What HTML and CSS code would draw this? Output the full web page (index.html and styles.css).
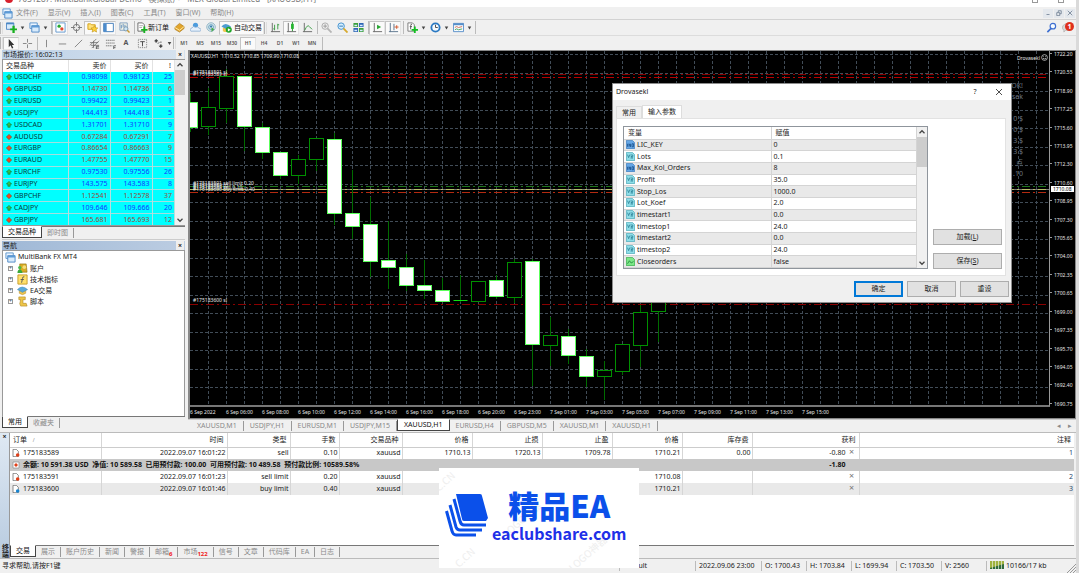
FILE: index.html
```html
<!DOCTYPE html>
<html lang="zh-CN">
<head>
<meta charset="utf-8">
<title>XAUUSD,H1</title>
<link rel="stylesheet" href="styles.css">
</head>
<body>
<svg class="defs" aria-hidden="true">
  <symbol id="windows" viewBox="0 0 12 12"><path d="M1 1h8v6H1z" fill="#eaf4ff" stroke="#5a94cc"/><path d="M3 4h8v7H3z" fill="#d8ebfc" stroke="#4b87c4"/><path d="M3 4h8v2H3z" fill="#5b9bd8"/></symbol>
  <symbol id="newchart" viewBox="0 0 12 12"><path d="M.5 1h8v7h-8z" fill="#d8ebfc" stroke="#4b87c4"/><path d="M.5 1h8v1.500h-8z" fill="#4b87c4"/><path d="M7 4v3H4.500v2H7v3h2.500V9H12V7H9.500V4z" fill="#18b020"/></symbol>
  <symbol id="marketwatch" viewBox="0 0 12 12"><path d="M1 1h10v10H1z" fill="#fff" stroke="#5e95cc"/><circle cx="4.500" cy="4.500" r="1.800" fill="#25a92f"/><circle cx="7.500" cy="7.500" r="1.800" fill="#e0492c"/></symbol>
  <symbol id="target" viewBox="0 0 12 12"><circle cx="6" cy="6" r="3.500" fill="none" stroke="#777"/><path d="M6 0v12M0 6h12" stroke="#777"/><circle cx="6" cy="6" r="1.500" fill="#f0f0f0"/></symbol>
  <symbol id="folderstar" viewBox="0 0 12 12"><path d="M1 2h3l1 1h4v5H1z" fill="#ffe27a" stroke="#d3a017"/><path d="M8 4l1.200 2.300 2.600.2-1.900 1.900.6 2.600L8 9.700 5.600 11l.6-2.600L4.300 6.500l2.500-.2z" fill="#ffd23c" stroke="#b98d14" stroke-width=".6"/></symbol>
  <symbol id="panel" viewBox="0 0 12 12"><path d="M.7 1.500h10.600v9H.7z" fill="#fff" stroke="#3e79b8"/><path d="M1 2h3v8.500H1z" fill="#4c8ccd"/></symbol>
  <symbol id="tester" viewBox="0 0 12 12"><path d="M1 1h8v8H1z" fill="#f8f6e8" stroke="#7d9cc0"/><path d="M2.500 3v4M4.500 2v4M6.500 3v4" stroke="#5588bb"/><circle cx="7.500" cy="7.500" r="2.300" fill="#cde8fa" stroke="#7694aa"/><path d="M9 9l2.500 2.500" stroke="#c39835" stroke-width="1.500"/></symbol>
  <symbol id="neworder" viewBox="0 0 12 12"><path d="M1 1h5l2 2v7H1z" fill="#fff" stroke="#666"/><path d="M2.500 4h4M2.500 6h3" stroke="#888" stroke-width=".7"/><path d="M7 5v2.500H4.500v2H7V12h2V9.500h2.500v-2H9V5z" fill="#18b020"/></symbol>
  <symbol id="book" viewBox="0 0 12 12"><path d="M1 6l5-4.500 5 3.500v2L6 11 1 8z" fill="#e2a52c" stroke="#a97411" stroke-width=".7"/><path d="M1 6l5 3 5-4" fill="none" stroke="#fff0b0"/></symbol>
  <symbol id="cloud" viewBox="0 0 12 12"><circle cx="6" cy="3.500" r="2.800" fill="#4d9cdd"/><path d="M1 10a2 2 0 0 1 1-3.500 2.700 2.700 0 0 1 4-.7 3 3 0 0 1 4 1A1.700 1.700 0 0 1 11 10z" fill="#e7f1fb" stroke="#719bc9" stroke-width=".7"/></symbol>
  <symbol id="signal" viewBox="0 0 12 12"><circle cx="5.500" cy="5.500" r="4.700" fill="#dbe7ea" stroke="#8eb4c6"/><circle cx="5.500" cy="5.500" r="2.600" fill="none" stroke="#5d9cc1"/><circle cx="5.500" cy="5" r="1.200" fill="#397cae"/><path d="M6 6v5l3-3z" fill="#47a948"/></symbol>
  <symbol id="expert" viewBox="0 0 12 12"><path d="M2.500 6h7v3q-3.500 3-7 0z" fill="#f0c64f" stroke="#bd912b" stroke-width=".6"/><path d="M.5 5q5-5.500 11 0l-5.500 3z" fill="#59a9da" stroke="#3782b7" stroke-width=".6"/></symbol>
  <symbol id="autotrade" viewBox="0 0 12 12"><path d="M2 6h7v4q-3 2-7 0z" fill="#f0c64f"/><path d="M.5 5q4-5.500 10.500 0L6 8z" fill="#4d9dd0"/><circle cx="8.500" cy="8.500" r="3.300" fill="#22a52a"/><path d="M7.500 6.700v3.600l3-1.800z" fill="#fff"/></symbol>
  <symbol id="bars" viewBox="0 0 12 12"><path d="M2.500 1v9.500H11M1 10.500h2" fill="none" stroke="#666"/><path d="M5 3v6M5 7.500H3.500M8.500 2v6M8.500 3H10" stroke="#3a9b42" fill="none"/></symbol>
  <symbol id="candles" viewBox="0 0 12 12"><path d="M2.500 1v9.500H11M1 10.500h2" fill="none" stroke="#666"/><path d="M7 0v10" stroke="#198f22"/><path d="M5.500 2h3v5.500h-3z" fill="#25b32f"/></symbol>
  <symbol id="linechart" viewBox="0 0 12 12"><path d="M2.500 1v9.500H11M1 10.500h2" fill="none" stroke="#666"/><path d="M3 9q3-7 5-4l3 3" stroke="#3a9b42" fill="none"/></symbol>
  <symbol id="zoomin" viewBox="0 0 12 12"><circle cx="4.500" cy="4.500" r="3.500" fill="#eee" stroke="#aaa"/><path d="M2.500 4.500h4m-2-2v4" stroke="#999"/><path d="M7 7l4.500 4.500" stroke="#b5b5b5" stroke-width="2"/></symbol>
  <symbol id="zoomout" viewBox="0 0 12 12"><circle cx="4.500" cy="4.500" r="3.500" fill="#d7efff" stroke="#3c8dcc"/><path d="M2.500 4.500h4" stroke="#2473b4"/><path d="M7 7l4.500 4.500" stroke="#d6a92e" stroke-width="2"/></symbol>
  <symbol id="tile" viewBox="0 0 12 12"><path d="M.5 1h5v4.500h-5zM6.500 6.500h5V11h-5z" fill="#3a9e3c"/><path d="M6.500 1h5v4.500h-5zM.5 6.500h5V11h-5z" fill="#2d65b5"/><path d="M1.500 3h3v1.500h-3zM7.500 3h3v1.500h-3zM1.500 8.500h3V10h-3zM7.500 8.500h3V10h-3z" fill="#d8ecff"/></symbol>
  <symbol id="autoscroll" viewBox="0 0 12 12"><path d="M2.500 1v9.500H11M1 10.500h2" fill="none" stroke="#666"/><path d="M5.500 3v5L10 5.500z" fill="#25a52f"/></symbol>
  <symbol id="shift" viewBox="0 0 12 12"><path d="M2.500 1v9.500H11M1 10.500h2M6.500 2v7" fill="none" stroke="#56718a"/><path d="M7 5.500h4.500M9.500 3.500v4" stroke="#d2562b"/></symbol>
  <symbol id="indicator" viewBox="0 0 12 12"><path d="M1 1h5l2 2v7H1z" fill="#fff" stroke="#777"/><path d="M5.500 2.500Q4 2 4 4v4M3 5h2.500" stroke="#555" fill="none"/><path d="M7.500 5v2.500H5v2h2.500V12h2V9.500H12v-2H9.500V5z" fill="#12bd20"/></symbol>
  <symbol id="clock" viewBox="0 0 12 12"><circle cx="6" cy="6" r="4.500" fill="#f4faff" stroke="#2878c2" stroke-width="2"/><path d="M6 3v3h2.500" fill="none" stroke="#444"/></symbol>
  <symbol id="template" viewBox="0 0 12 12"><path d="M.5 1.500h11v9H.5z" fill="#f6fbff" stroke="#568ec8"/><path d="M.5 1.500h11v2H.5z" fill="#568ec8"/><path d="M2 6l2-1 2 1 4-1" fill="none" stroke="#d26c50"/><path d="M2 8.500l2-1 2 1 4-1" fill="none" stroke="#49a55b"/></symbol>
  <symbol id="cursor" viewBox="0 0 12 12"><path d="M3 1v9l2-2 1.500 3.500 1.500-.7L6.500 7.500H9z" fill="#333"/></symbol>
  <symbol id="cross" viewBox="0 0 12 12"><path d="M6 1v4M6 7v4M1 6h4M7 6h4" stroke="#666" stroke-width=".8"/></symbol>
  <symbol id="vline" viewBox="0 0 12 12"><path d="M6 2v8" stroke="#666" stroke-width=".8"/></symbol>
  <symbol id="hline" viewBox="0 0 12 12"><path d="M2 6.500h8" stroke="#666" stroke-width=".8"/></symbol>
  <symbol id="trend" viewBox="0 0 12 12"><path d="M2 10l8-8" stroke="#666" stroke-width=".8"/></symbol>
  <symbol id="channel" viewBox="0 0 12 12"><path d="M1 8l7-7M3 11l8-8M1 5h9M2 8h9M5 3v8" stroke="#666" stroke-width=".8"/><path d="M8 9h3M8 11h3M8 9v3" stroke="#333" stroke-width=".8"/></symbol>
  <symbol id="fibo" viewBox="0 0 12 12"><path d="M1 2.500h10M1 5.500h10M1 8.500h7" stroke="#777" stroke-dasharray="1.500 .5"/><path d="M9.500 12V8.500H12M9.500 10.500h2" fill="none" stroke="#444" stroke-width=".8"/></symbol>
  <symbol id="label" viewBox="0 0 12 12"><path d="M1.500 1.500h9v9h-9z" fill="none" stroke="#777" stroke-dasharray="1 1"/><path d="M3.500 4h5M6 4v5" stroke="#444"/></symbol>
  <symbol id="shapes" viewBox="0 0 12 12"><path d="M1 3.500L3.500 1 6 3.500H4.500V5h-2V3.500zM6 8.500h1.500V7h2v1.500H11L8.500 11z" fill="#444"/><path d="M5 6l2-1M7.500 4.500h2" stroke="#444" stroke-width=".8"/></symbol>
  <symbol id="search" viewBox="0 0 12 12"><circle cx="7.500" cy="4.500" r="3" fill="#f6fbff" stroke="#3d6ed0" stroke-width="1.300"/><path d="M5.500 7l-4 4" stroke="#3d6ed0" stroke-width="1.800"/></symbol>
  <symbol id="chat" viewBox="0 0 12 12"><path d="M1 4q4-4 9 0 2 3-3 5H4l-2 2V9q-3-2-1-5z" fill="#d7d7d7" stroke="#aaa" stroke-width=".7"/></symbol>
  <symbol id="up" viewBox="0 0 8 8"><path d="M4 .5L7.500 4H5.500v3h-3V4H.5z" fill="#35c448" stroke="#176b26" stroke-width=".8"/></symbol>
  <symbol id="down" viewBox="0 0 8 8"><path d="M4 .5L7.500 4 4 7.500.5 4z" fill="#f04a20" stroke="#8c3a1a" stroke-width=".8"/></symbol>
  <symbol id="account" viewBox="0 0 12 12"><path d="M3 1h7l1 9H3z" fill="#d8ac24" stroke="#957312" stroke-width=".7"/><circle cx="8" cy="4.500" r="2" fill="#f6dd79"/><circle cx="3" cy="5" r="1.800" fill="#48b94a"/><path d="M.5 11q0-4 2.500-4t3 4z" fill="#38a83c"/></symbol>
  <symbol id="func" viewBox="0 0 12 12"><path d="M1 1h10v10H1z" fill="#ffe06b" stroke="#c79b25"/><path d="M8 3Q6 2.500 6 5L5 9.500M4 6h3.500" fill="none" stroke="#555"/></symbol>
  <symbol id="scroll" viewBox="0 0 12 12"><path d="M2 1h7v3H6.500v4H10l1 3H4L3 8.500 4 4H2z" fill="#edc549" stroke="#b68d27" stroke-width=".7"/></symbol>
  <symbol id="doc-red" viewBox="0 0 12 12"><path d="M1.500.5h5l3 3v8h-8z" fill="#fff" stroke="#555"/><circle cx="8.500" cy="9" r="2.700" fill="#df3f19"/></symbol>
  <symbol id="doc-blue" viewBox="0 0 12 12"><path d="M1.500.5h5l3 3v8h-8z" fill="#fff" stroke="#555"/><circle cx="8.500" cy="9" r="2.700" fill="#1883ce"/></symbol>
  <symbol id="balance" viewBox="0 0 12 12"><path d="M1.500 1.500h9v9h-9z" fill="#fff" stroke="#888"/><path d="M6 3l3 3-3 3-3-3z" fill="#df3f19"/></symbol>
  <symbol id="t-int" viewBox="0 0 12 12"><path d="M.5.5h8l3 3v8H.5z" fill="#65a7e6" stroke="#3e7ebd"/><path d="M2 5v4M4 9V5l2 4V5M8 5h2v4H8z" fill="none" stroke="#174e8a"/></symbol>
  <symbol id="t-dbl" viewBox="0 0 12 12"><path d="M.5.5h8l3 3v8H.5z" fill="#8edde8" stroke="#4ba9b8"/><path d="M2 3.500l1.500 4L5 3.500M6 8h3l-2.500-2H9V4H6" fill="none" stroke="#267c92"/></symbol>
  <symbol id="t-bool" viewBox="0 0 12 12"><path d="M.5.5h8l3 3v8H.5z" fill="#7be887" stroke="#35aa4b"/><path d="M2 9l2.500-4 2.500 3 3-2" fill="none" stroke="#187a34"/></symbol>
</svg>

<header class="titlebar"><i class="app-dot"></i><span>7031287: MultiBankGlobal-Demo - 模拟账户 - MEX Global Limited - [XAUUSD,H1]</span><span class="win-controls"><i></i><i></i></span></header>

<nav class="menubar">
  <svg class="icon"><use href="#windows"/></svg>
  <button>文件(F)</button><button>显示(V)</button><button>插入(I)</button><button>图表(C)</button><button>工具(T)</button><button>窗口(W)</button><button>帮助(H)</button>
  <div class="mdi"><button aria-label="最小化"><svg viewBox="0 0 8 8"><path d="M2 6h4"/></svg></button><button aria-label="还原"><svg viewBox="0 0 8 8"><path d="M1 3.500h4v4H1zM3 3V1h4v4H5"/></svg></button><button aria-label="关闭"><svg viewBox="0 0 8 8"><path d="M1 1l6 6M7 1L1 7"/></svg></button></div>
</nav>

<div class="toolbar">
  <i class="grip"></i>
  <button aria-label="新图表"><svg class="icon"><use href="#newchart"/></svg></button><i class="caret"></i>
  <button aria-label="配置"><svg class="icon"><use href="#windows"/></svg></button><i class="caret"></i><i class="sep"></i>
  <button class="on" aria-label="市场报价"><svg class="icon"><use href="#marketwatch"/></svg></button>
  <button aria-label="数据窗口"><svg class="icon"><use href="#target"/></svg></button>
  <button class="on" aria-label="导航"><svg class="icon"><use href="#folderstar"/></svg></button>
  <button class="on" aria-label="终端"><svg class="icon"><use href="#panel"/></svg></button>
  <button aria-label="策略测试"><svg class="icon"><use href="#tester"/></svg></button><i class="sep"></i>
  <button class="wide"><svg class="icon"><use href="#neworder"/></svg>新订单</button>
  <button aria-label="编辑器"><svg class="icon"><use href="#book"/></svg></button>
  <button aria-label="社区"><svg class="icon"><use href="#cloud"/></svg></button>
  <button aria-label="信号"><svg class="icon"><use href="#signal"/></svg></button>
  <button class="wide auto on"><svg class="icon"><use href="#autotrade"/></svg>自动交易</button><i class="grip"></i>
  <button aria-label="柱状图"><svg class="icon"><use href="#bars"/></svg></button>
  <button class="on" aria-label="蜡烛图"><svg class="icon"><use href="#candles"/></svg></button>
  <button aria-label="折线图"><svg class="icon"><use href="#linechart"/></svg></button><i class="sep"></i>
  <button aria-label="放大"><svg class="icon"><use href="#zoomin"/></svg></button>
  <button aria-label="缩小"><svg class="icon"><use href="#zoomout"/></svg></button>
  <button aria-label="平铺"><svg class="icon"><use href="#tile"/></svg></button><i class="sep"></i>
  <button class="on" aria-label="自动滚动"><svg class="icon"><use href="#autoscroll"/></svg></button>
  <button class="on" aria-label="图表平移"><svg class="icon"><use href="#shift"/></svg></button><i class="sep"></i>
  <button aria-label="指标"><svg class="icon"><use href="#indicator"/></svg></button><i class="caret"></i>
  <button aria-label="周期"><svg class="icon"><use href="#clock"/></svg></button><i class="caret"></i>
  <button aria-label="模板"><svg class="icon"><use href="#template"/></svg></button><i class="caret"></i><i class="sep"></i>
  <div class="tools-right"><button aria-label="搜索"><svg class="icon"><use href="#search"/></svg></button><button class="chat" aria-label="消息"><svg class="icon"><use href="#chat"/></svg><b>1</b></button></div>
</div>

<div class="toolbar drawing">
  <i class="grip"></i>
  <button class="on" aria-label="光标"><svg class="icon"><use href="#cursor"/></svg></button>
  <button aria-label="十字线"><svg class="icon"><use href="#cross"/></svg></button><i class="sep"></i>
  <button aria-label="垂直线"><svg class="icon"><use href="#vline"/></svg></button>
  <button aria-label="水平线"><svg class="icon"><use href="#hline"/></svg></button>
  <button aria-label="趋势线"><svg class="icon"><use href="#trend"/></svg></button>
  <button aria-label="通道"><svg class="icon"><use href="#channel"/></svg></button>
  <button aria-label="斐波那契"><svg class="icon"><use href="#fibo"/></svg></button>
  <button class="letter">A</button>
  <button aria-label="文字标签"><svg class="icon"><use href="#label"/></svg></button>
  <button aria-label="箭头"><svg class="icon"><use href="#shapes"/></svg></button><i class="caret"></i><i class="grip"></i>
  <div class="periods"><button>M1</button><button>M5</button><button>M15</button><button>M30</button><button class="on">H1</button><button>H4</button><button>D1</button><button>W1</button><button>MN</button></div><i class="sep"></i>
</div>

<main class="workspace">
  <aside class="sidebar">
    <section class="market">
      <h2 class="pane-title">市场报价: 16:02:13<button aria-label="关闭">×</button></h2>
      <div class="quotes">
        <table>
          <colgroup><col class="c-sym"><col class="c-bid"><col class="c-ask"><col></colgroup>
          <thead><tr><th>交易品种</th><th>卖价</th><th>买价</th><th>!</th></tr></thead>
          <tbody>
            <tr class="u"><td><svg><use href="#up"/></svg>USDCHF</td><td>0.98098</td><td>0.98123</td><td>25</td></tr>
            <tr class="d"><td><svg><use href="#down"/></svg>GBPUSD</td><td>1.14730</td><td>1.14736</td><td>6</td></tr>
            <tr class="u"><td><svg><use href="#up"/></svg>EURUSD</td><td>0.99422</td><td>0.99423</td><td>1</td></tr>
            <tr class="u"><td><svg><use href="#up"/></svg>USDJPY</td><td>144.413</td><td>144.418</td><td>5</td></tr>
            <tr class="u"><td><svg><use href="#up"/></svg>USDCAD</td><td>1.31701</td><td>1.31710</td><td>9</td></tr>
            <tr class="d"><td><svg><use href="#down"/></svg>AUDUSD</td><td>0.67284</td><td>0.67291</td><td>7</td></tr>
            <tr class="d"><td><svg><use href="#down"/></svg>EURGBP</td><td>0.86654</td><td>0.86663</td><td>9</td></tr>
            <tr class="d"><td><svg><use href="#down"/></svg>EURAUD</td><td>1.47755</td><td>1.47770</td><td>15</td></tr>
            <tr class="u"><td><svg><use href="#up"/></svg>EURCHF</td><td>0.97530</td><td>0.97556</td><td>26</td></tr>
            <tr class="u"><td><svg><use href="#up"/></svg>EURJPY</td><td>143.575</td><td>143.583</td><td>8</td></tr>
            <tr class="d"><td><svg><use href="#down"/></svg>GBPCHF</td><td>1.12541</td><td>1.12578</td><td>37</td></tr>
            <tr class="u"><td><svg><use href="#up"/></svg>CADJPY</td><td>109.646</td><td>109.666</td><td>20</td></tr>
            <tr class="d"><td><svg><use href="#down"/></svg>GBPJPY</td><td>165.681</td><td>165.693</td><td>12</td></tr>
          </tbody>
        </table>
        <div class="scroll"><svg viewBox="0 0 8 8"><path d="M2 5l2-2 2 2"/></svg><i></i><svg viewBox="0 0 8 8"><path d="M2 3l2 2 2-2"/></svg></div>
      </div>
      <div class="tabs"><button class="active">交易品种</button><button>即时图</button></div>
    </section>
    <section class="navigator">
      <h2 class="pane-title strong">导航<button aria-label="关闭">×</button></h2>
      <ul class="tree">
        <li><svg class="icon"><use href="#windows"/></svg>MultiBank FX MT4</li>
        <li class="child"><i>+</i><svg class="icon"><use href="#account"/></svg>账户</li>
        <li class="child"><i>+</i><svg class="icon"><use href="#func"/></svg>技术指标</li>
        <li class="child"><i>+</i><svg class="icon"><use href="#expert"/></svg>EA交易</li>
        <li class="child"><i>+</i><svg class="icon"><use href="#scroll"/></svg>脚本</li>
      </ul>
      <div class="tabs"><button class="active">常用</button><button>收藏夹</button></div>
    </section>
  </aside>

  <section class="chart-area">
    <div class="chart">
      <svg class="plot" id="plot" role="img" aria-label="XAUUSD H1"></svg>
      <div class="prices" id="prices"></div>
      <div class="times" id="times"></div>
      <div class="ea-name">Drovasekl<svg viewBox="0 0 8 8"><circle cx="4" cy="4" r="3.300"/><path d="M2.500 3h.8M4.700 3h.8M2.200 4.800q1.800 1.800 3.600 0"/></svg></div>
      <div class="ea-info"><span>OK!</span><span>sek</span><span></span><span>0 $</span><span>0 $</span><span>3 $</span><span>3 $</span><span>点</span><span>.10</span></div>
      <div class="price-now">1710.08</div>
    </div>
    <div class="tabs chart-tabs"><button>XAUUSD,M1</button><button>USDJPY,H1</button><button>EURUSD,M1</button><button>USDJPY,M15</button><button class="active">XAUUSD,H1</button><button>EURUSD,H4</button><button>GBPUSD,M5</button><button>XAUUSD,M1</button><button>XAUUSD,H1</button><span class="arrows"><i>◂</i><i>▸</i></span></div>
  </section>
</main>

<section class="terminal">
  <div class="rail"><button aria-label="关闭">×</button><span>终端</span></div>
  <div class="terminal-body">
    <table>
      <colgroup><col class="k1"><col class="k2"><col class="k3"><col class="k4"><col class="k5"><col class="k6"><col class="k6"><col class="k6"><col class="k6"><col class="k6"><col class="k7"><col></colgroup>
      <thead><tr><th>订单 <small>/</small></th><th>时间</th><th>类型</th><th>手数</th><th>交易品种</th><th>价格</th><th>止损</th><th>止盈</th><th>价格</th><th>库存费</th><th>获利</th><th>注释</th></tr></thead>
      <tbody>
        <tr><td><svg><use href="#doc-red"/></svg>175183589</td><td>2022.09.07 16:01:22</td><td>sell</td><td>0.10</td><td>xauusd</td><td>1710.13</td><td>1720.13</td><td>1709.78</td><td>1710.21</td><td>0.00</td><td>-0.80<button aria-label="平仓">×</button></td><td>1</td></tr>
        <tr class="sum"><td colspan="10"><svg><use href="#balance"/></svg>余额: 10 591.38 USD&nbsp; 净值: 10 589.58&nbsp; 已用预付款: 100.00&nbsp; 可用预付款: 10 489.58&nbsp; 预付款比例: 10589.58%</td><td>-1.80</td><td></td></tr>
        <tr><td><svg><use href="#doc-red"/></svg>175183591</td><td>2022.09.07 16:01:23</td><td>sell limit</td><td>0.20</td><td>xauusd</td><td></td><td></td><td></td><td>1710.08</td><td></td><td><button aria-label="删除">×</button></td><td>2</td></tr>
        <tr class="alt"><td><svg><use href="#doc-blue"/></svg>175183600</td><td>2022.09.07 16:01:46</td><td>buy limit</td><td>0.40</td><td>xauusd</td><td></td><td></td><td></td><td>1710.21</td><td></td><td><button aria-label="删除">×</button></td><td>3</td></tr>
      </tbody>
    </table>
    <div class="tabs"><button class="active">交易</button><button>展示</button><button>账户历史</button><button>新闻</button><button>警报</button><button>邮箱<sub>6</sub></button><button>市场<sub>122</sub></button><button>信号</button><button>文章</button><button>代码库</button><button>EA</button><button>日志</button></div>
  </div>
</section>

<footer class="status">
  <span class="help">寻求帮助,请按F1键</span>
  <span class="s-profile">Default</span><span class="s-date">2022.09.06 23:00</span><span class="s-val">O: 1700.43</span><span class="s-val">H: 1703.84</span><span class="s-val">L: 1699.94</span><span class="s-val">C: 1703.50</span><span class="s-val">V: 2560</span>
  <span class="s-net"><svg viewBox="0 0 14 8"><path d="M0 0h14v8H0z" fill="#2f6a3c"/><path d="M0 0h14v3L0 7z" fill="#9fb23f"/><path d="M2.500 0v8M5.500 0v8M8.500 0v8M11.500 0v8" stroke="#e8efe0" stroke-width=".7"/></svg>10166/17 kb</span>
  <svg class="resize" viewBox="0 0 10 10"><path d="M1 10l9-9M4 10l6-6M7 10l3-3"/></svg>
</footer>

<div class="dialog" role="dialog" aria-label="Drovasekl">
  <div class="dialog-title"><span>Drovasekl</span><button aria-label="帮助">?</button><button aria-label="关闭"><svg viewBox="0 0 8 8"><path d="M1 1l6 6M7 1L1 7"/></svg></button></div>
  <div class="dialog-tabs"><button>常用</button><button class="active">输入参数</button></div>
  <div class="dialog-panel">
    <div class="params">
      <table>
        <colgroup><col class="p-name"><col></colgroup>
        <thead><tr><th>变量</th><th>赋值</th></tr></thead>
        <tbody>
          <tr><td><svg><use href="#t-int"/></svg>LIC_KEY</td><td>0</td></tr>
          <tr><td><svg><use href="#t-dbl"/></svg>Lots</td><td>0.1</td></tr>
          <tr><td><svg><use href="#t-int"/></svg>Max_Kol_Orders</td><td>8</td></tr>
          <tr><td><svg><use href="#t-dbl"/></svg>Profit</td><td>35.0</td></tr>
          <tr><td><svg><use href="#t-dbl"/></svg>Stop_Los</td><td>1000.0</td></tr>
          <tr><td><svg><use href="#t-dbl"/></svg>Lot_Koef</td><td>2.0</td></tr>
          <tr><td><svg><use href="#t-dbl"/></svg>timestart1</td><td>0.0</td></tr>
          <tr><td><svg><use href="#t-dbl"/></svg>timestop1</td><td>24.0</td></tr>
          <tr><td><svg><use href="#t-dbl"/></svg>timestart2</td><td>0.0</td></tr>
          <tr><td><svg><use href="#t-dbl"/></svg>timestop2</td><td>24.0</td></tr>
          <tr><td><svg><use href="#t-bool"/></svg>Closeorders</td><td>false</td></tr>
        </tbody>
      </table>
      <div class="scroll"><svg viewBox="0 0 8 8"><path d="M2 5l2-2 2 2"/></svg><i></i><svg viewBox="0 0 8 8"><path d="M2 3l2 2 2-2"/></svg></div>
    </div>
    <div class="side-buttons"><button class="btn">加载(<u>L</u>)</button><button class="btn">保存(<u>S</u>)</button></div>
  </div>
  <div class="dialog-actions"><button class="btn primary">确定</button><button class="btn">取消</button><button class="btn">重设</button></div>
</div>

<div class="brand">
  <svg class="watermarks" viewBox="0 0 200 100" aria-hidden="true"><g fill="#eeeeee" font-size="10"><text transform="translate(0 24) rotate(-42)">C.CN</text><text transform="translate(68 70) rotate(-42)">LOGO神器</text><text transform="translate(134 104) rotate(-42)">LOGO神器</text><text transform="translate(20 100) rotate(-42)">C.CN</text></g></svg>
  <svg class="brand-mark" viewBox="0 0 43 43"><path d="M11 0h24q2 0 2 2l6 22-2 3H19q-2 0-2-2z" fill="#0b50ea"/><path d="M9 5l6 22q1 4 4 4h22M5 11l6 22q1 3 4 3h22M1.500 17L7 37q1 4 4 4h20" fill="none" stroke="#0b50ea" stroke-width="3"/></svg>
  <div class="brand-text"><strong>精品EA</strong><span>eaclubshare.com</span></div>
</div>
<script src="chart.js"></script>
</body>
</html>
```
FILE: styles.css
```css
* { box-sizing: border-box; }
body {
  margin: 0; height: 100vh; overflow: hidden; position: relative;
  display: flex; flex-direction: column;
  background: #f0f0f0; color: #222; border-right: 3px solid #dadada;
  font: 7px/10px "Noto Sans", "Noto Sans CJK SC", sans-serif;
}
button { font: inherit; color: inherit; background: none; border: 0; padding: 0; margin: 0; }
table { border-collapse: collapse; table-layout: fixed; width: 100%; }
th, td { padding: 0; font-weight: 400; white-space: nowrap; overflow: hidden; }
i { font-style: normal; }
.defs { display: none; }
.icon { width: 11px; height: 11px; flex: none; }

.titlebar { height: 7px; flex: none; overflow: hidden; background: #fff; color: #777; display: flex; align-items: flex-end; padding: 0 12px 4px 5px; font-size: 8px; gap: 5px; line-height: 8px; white-space: nowrap; }
.app-dot { width: 8px; height: 8px; border-radius: 50%; background: #d8202c; }
.win-controls { margin-left: auto; display: flex; gap: 20px; }
.win-controls i { width: 6px; height: 6px; border: 1px solid #999; }

.menubar { height: 12px; flex: none; display: flex; align-items: center; padding-left: 2px; gap: 10px; color: #8a8a8a; }
.menubar .icon { margin-right: -7px; }
.mdi { margin-left: auto; display: flex; gap: 1px; padding-right: 1px; }
.mdi button { width: 10px; height: 9px; background: #e4e8ed; display: grid; place-items: center; }
.mdi svg { width: 6px; height: 6px; fill: none; stroke: #65778b; }

.toolbar { height: 16px; flex: none; display: flex; align-items: center; border-top: 1px solid #d2d2d2; }
.toolbar button { width: 16px; height: 14px; display: flex; align-items: center; justify-content: center; border: 1px solid transparent; flex: none; }
.toolbar button.on { background: #fafafa; border-color: #c4c4c4 #e4e4e4 #e4e4e4 #c4c4c4; }
.toolbar .wide { width: 36px; color: #111; white-space: nowrap; }
.toolbar .auto { width: 45px; gap: 2px; }
.toolbar .letter { font-weight: 700; color: #555; }
.grip { width: 3px; height: 12px; border-left: 1px solid #b5b5b5; border-right: 1px solid #dedede; flex: none; }
.sep { width: 3px; height: 13px; border-right: 1px solid #bbb; flex: none; }
.caret { width: 7px; height: 4px; flex: none; background: #444; clip-path: polygon(25% 25%, 75% 25%, 50% 100%); }
.tools-right { margin-left: auto; display: flex; padding-right: 1px; }
.toolbar .chat { position: relative; }
.chat b { position: absolute; right: 0; top: 0; width: 9px; height: 9px; border-radius: 50%; background: #df301c; color: #fff; line-height: 9px; }
.drawing { height: 15px; border-top-color: #dcdcdc; }
.drawing button { height: 13px; }
.periods { display: flex; }
.periods button { font-size: 5px; font-weight: 600; color: #555; }

.workspace { flex: 1; min-height: 0; display: flex; }
.sidebar { width: 188px; flex: none; display: flex; flex-direction: column; padding: 0 3px 3px 2px; }
.market { border-bottom: 1px solid #ccc; }
.pane-title { margin: 0; height: 9px; padding: 0 1px; font-size: 7px; line-height: 9px; font-weight: 400; display: flex; justify-content: space-between; background: linear-gradient(90deg, #bdd1e7, #d6e2ee); }
.pane-title.strong { background: linear-gradient(90deg, #9fb8d6, #bccde2); }
.pane-title button { width: 8px; line-height: 8px; background: #eee; font-weight: 700; }
.quotes { display: flex; background: #fff; height: 167px; border: solid #999; border-width: 1px 0 1px 1px; overflow: hidden; }
.quotes table { height: 166px; flex: 1; width: 0; }
.c-sym { width: 65px; }
.c-bid, .c-ask { width: 42px; }
.quotes th, .quotes td { text-align: right; padding-right: 2px; border-right: 1px solid #b6dede; }
.quotes th { height: 12px; padding-right: 3px; border-color: #e2e2e2; }
.quotes th:first-child, .quotes td:first-child { text-align: left; padding-left: 3px; }
.quotes tbody tr { background: #0ff; border-bottom: 1px solid #a5dede; color: #123bff; }
.quotes tbody tr.d { color: #9c4a3c; }
.quotes tbody td:first-child { color: #053c3c; }
.quotes td svg { width: 6px; height: 6px; margin-right: 2px; vertical-align: -1px; }
.scroll { width: 10px; flex: none; background: #f0f0f0; display: flex; flex-direction: column; align-items: stretch; }
.scroll svg { height: 10px; fill: none; stroke: #444; }
.scroll i { height: 25px; background: #cdcdcd; margin-bottom: auto; }

.tabs { display: flex; height: 13px; flex: none; color: #8a8a8a; line-height: 11px; border-top: 1px solid #777; background: #f0f0f0; white-space: nowrap; }
.tabs button { padding: 0 5px; border-right: 1px solid #999; height: 10px; margin-top: 1px; line-height: 10px; flex: none; }
.tabs button.active { background: #fff; color: #111; border: 1px solid #444; border-top-color: #fff; height: 12px; margin-top: -1px; }
.navigator { flex: 1; min-height: 0; display: flex; flex-direction: column; padding-top: 1px; }
.tree { flex: 1; list-style: none; margin: 0; padding: 0 0 0 2px; background: #fff; border: 1px solid #999; border-bottom: 0; }
.tree li { display: flex; align-items: center; gap: 2px; height: 11px; }
.tree li:first-child { height: 12px; }
.tree i { width: 5px; height: 5px; border: 1px solid #999; color: #456; font-size: 5px; line-height: 3px; text-align: center; margin-right: 2px; }
.tree .child { padding-left: 3px; }

.chart-area { flex: 1; min-width: 0; display: flex; flex-direction: column; }
.chart { flex: 1; min-height: 0; position: relative; display: grid; grid-template-columns: 1fr 25px; grid-template-rows: 1fr 11px; background: #000; border: 2px solid #888; border-width: 1px 1px 1px 2px; color: #e6e6e6; font-size: 5px; line-height: 6px; }
.plot { width: 100%; height: 100%; border-right: 1px solid #999; border-bottom: 2px solid #777; }
.prices { display: flex; flex-direction: column; justify-content: space-between; align-items: flex-start; }
.prices span::before { content: ""; display: inline-block; width: 2px; height: 1px; margin-right: 2px; background: #999; vertical-align: 2px; }
.times { grid-column: 1 / 3; display: flex; padding-top: 2px; }
.times span { width: 36px; flex: none; white-space: nowrap; }
.ea-name { position: absolute; right: 27px; top: 3px; display: flex; align-items: center; gap: 1px; background: #000; }
.ea-name svg { width: 7px; height: 7px; fill: none; stroke: #e6e6e6; stroke-width: .8; }
.ea-info { position: absolute; right: 52px; top: 30px; display: grid; grid-auto-rows: 11px; justify-items: end; line-height: 10px; font-size: 7px; color: #6b7681; }
.price-now { position: absolute; right: 1px; top: 135px; width: 23px; background: #fff; color: #000; padding-left: 2px; }
.chart-tabs { border-top-color: #ccc; padding-left: 3px; }
.chart-tabs button { padding: 0 6px; }
.arrows { margin-left: auto; display: flex; gap: 7px; padding-right: 4px; }

.terminal { display: flex; height: 126px; flex: none; border-top: 1px solid #bbb; }
.rail { width: 9px; flex: none; background: linear-gradient(#dfe9f3, #b8cbe0); display: flex; flex-direction: column; justify-content: space-between; align-items: center; font-weight: 700; line-height: 8px; }
.rail span { writing-mode: vertical-rl; }
.terminal-body { flex: 1; min-width: 0; display: flex; flex-direction: column; justify-content: space-between; background: #fff; border-left: 1px solid #999; margin-right: 2px; }
.k1 { width: 91px; } .k2 { width: 126px; } .k3 { width: 63px; } .k4 { width: 49px; } .k5 { width: 63px; } .k6 { width: 70px; } .k7 { width: 107px; }
.terminal th, .terminal td { text-align: right; padding-right: 1px; height: 12px; border-right: 1px solid #d6d6d6; line-height: 10px; }
.terminal th { height: 14px; padding-right: 3px; border-bottom: 1px solid #ccc; }
.terminal th:first-child, .terminal td:first-child { text-align: left; padding-left: 1px; }
.terminal th:first-child { padding-left: 3px; }
.terminal th small { font-size: 5px; color: #888; margin-left: 4px; }
.terminal td svg { width: 8px; height: 8px; margin: 0 3px 0 1px; vertical-align: -2px; }
.terminal td button { width: 12px; color: #777; font-size: 9px; line-height: 8px; }
.terminal .sum { background: #c8c8c8; }
.terminal .sum td { font-weight: 700; border-color: #c8c8c8; color: #111; }
.terminal .sum td:nth-child(2) { padding-right: 13px; }
.terminal .alt { background: #e9e9e9; }
.terminal td:last-child, .terminal th:last-child { border-right: 0; }
.terminal td:last-child { color: #24486e; }
.terminal sub { font-size: 6px; color: #f02020; font-weight: 700; vertical-align: -2px; line-height: 1px; }

.status { height: 15px; flex: none; display: flex; align-items: center; border-top: 1px solid #bbb; white-space: nowrap; }
.status span { padding-left: 3px; border-left: 1px solid #bbb; }
.status .help { flex: 1; border: 0; padding-left: 2px; }
.s-profile { width: 76px; }
.s-date { width: 66px; }
.s-val { width: 45px; }
.s-net { width: 80px; }
.s-net svg { width: 14px; height: 8px; margin-right: 2px; vertical-align: -1px; }
.resize { width: 10px; height: 10px; align-self: flex-end; stroke: #999; fill: none; }

.dialog { position: absolute; left: 612px; top: 83px; width: 400px; background: #f0f0f0; border: 1px solid #8c8c8c; color: #222; }
.dialog-title { background: #fff; height: 16px; display: flex; align-items: center; padding: 0 8px 0 3px; gap: 16px; }
.dialog-title span { flex: 1; }
.dialog-title svg { width: 8px; height: 8px; fill: none; stroke: #222; stroke-width: .8; display: block; }
.dialog-title button { width: 8px; }
.dialog-tabs { display: flex; align-items: flex-end; padding: 5px 3px 0; height: 18px; }
.dialog-tabs button { height: 12px; padding: 0 5px; border: 1px solid #ddd; border-bottom: 0; }
.dialog-tabs .active { height: 13px; background: #fff; }
.dialog-panel { margin: 0 5px 0 3px; background: #fff; border: 1px solid #e2e2e2; padding: 7px 3px 6px 6px; display: flex; justify-content: space-between; }
.params { display: flex; width: 305px; height: 143px; border: 1px solid #8f959c; overflow: hidden; }
.params table { flex: 1; width: 0; height: 141px; }
.p-name { width: 147px; }
.params th, .params td { text-align: left; height: 11px; padding-left: 2px; line-height: 10px; border-right: 1px solid #d4d4d4; border-bottom: 1px solid #d4d4d4; }
.params th { height: 12px; padding-left: 4px; }
.params tbody tr:nth-child(odd) { background: #e9e9e9; }
.params td svg { width: 9px; height: 9px; margin-right: 2px; vertical-align: -2px; }
.params .scroll i { height: 30px; }
.side-buttons { display: flex; flex-direction: column; justify-content: flex-end; gap: 8px; width: 69px; }
.btn { height: 16px; background: #e1e1e1; border: 1px solid #adadad; }
.btn.primary { border: 2px solid #0078d7; }
.dialog-actions { display: flex; justify-content: flex-end; gap: 4px; padding: 5px 2px; }
.dialog-actions .btn { width: 49px; }

.brand { position: absolute; left: 439px; top: 468px; width: 200px; height: 100px; background: #fff; display: flex; align-items: center; gap: 4px; padding: 0 0 6px 6px; overflow: hidden; color: #0b50ea; font-family: "Noto Sans CJK SC", sans-serif; }
.watermarks { position: absolute; left: 0; top: 0; width: 200px; height: 100px; }
.brand-mark { width: 43px; height: 43px; flex: none; position: relative; }
.brand-text { position: relative; display: flex; flex-direction: column; align-items: center; font-weight: 700; }
.brand-text strong { font-size: 31px; line-height: 36px; }
.brand-text span { font-size: 16px; line-height: 20px; color: #2030e8; }
```
FILE: chart.js
```js
const plot = document.getElementById('plot');
const NS = 'http://www.w3.org/2000/svg';
function draw(tag, attrs, text) {
  const node = document.createElementNS(NS, tag);
  for (const key in attrs) node.setAttribute(key, attrs[key]);
  if (text) node.textContent = text;
  plot.appendChild(node);
}

const STEP = 18;
const ROWS = 19;
const TOP = 3;
const HEIGHT = 352;
const grid = { stroke: '#414c57', 'stroke-width': 1, 'stroke-dasharray': '3 2', 'shape-rendering': 'crispEdges' };
for (let i = 0; i < 120; i++) {
  const x = STEP * (i + 1) + 0.5;
  draw('line', { x1: x, x2: x, y1: 0, y2: '100%', ...grid });
}
for (let i = 0; i <= ROWS; i++) {
  const y = Math.round(TOP + i * HEIGHT / ROWS) + 0.5;
  draw('line', { x1: 0, x2: '100%', y1: y, y2: y, ...grid });
}

draw('line', { x1: 0, x2: '100%', y1: 138.5, y2: 138.5, stroke: '#777' });
[[23.5, '#8a0000'], [26.5, '#b40000'], [135.5, '#1c741c'], [138.5, '#b8c06a'], [141.5, '#b42a10'], [253.5, '#8a0000']].forEach(([y, stroke]) =>
  draw('line', { x1: 0, x2: '100%', y1: y, y2: y, stroke, 'stroke-dasharray': '8 3 2 3' }));

// high, body top, body bottom, low, filled
const candles = [
  [42, 52, 77, 81, 1], [37, 57, 76, 84, 0], [18, 26, 58, 72, 0], [26, 26, 76, 100, 1],
  [72, 77, 102, 108, 1], [102, 102, 125, 128, 1], [104, 109, 125, 133, 0], [87, 88, 109, 120, 0],
  [82, 89, 163, 174, 1], [119, 163, 176, 188, 1], [146, 174, 211, 226, 1], [170, 210, 217, 238, 1],
  [203, 217, 235, 240, 1], [209, 235, 240, 248, 1], [227, 240, 251, 251, 1], [224, 250, 250, 251, 1],
  [231, 231, 251, 251, 0], [224, 230, 246, 248, 1], [208, 212, 247, 252, 0], [208, 211, 294, 335, 1],
  [266, 285, 295, 315, 0], [278, 286, 305, 313, 1], [298, 306, 326, 336, 1], [310, 320, 326, 349, 0],
  [293, 294, 321, 324, 0], [254, 262, 295, 316, 0], [230, 240, 261, 291, 0]
];
candles.forEach(([high, top, bottom, low, filled], i) => {
  const x = STEP * i + 0.5;
  draw('line', { x1: x, x2: x, y1: high, y2: low, stroke: '#006c00' });
  if (top === bottom) {
    draw('line', { x1: x - 7, x2: x + 7, y1: top - 0.5, y2: top - 0.5, stroke: '#10e010' });
  } else {
    draw('rect', { x: x - 7, y: top - 0.5, width: 14, height: bottom - top, fill: filled ? '#fff' : '#000', stroke: filled ? '#5cff5c' : '#009000' });
  }
});

const label = { fill: '#e6e6e6', 'font-size': 5 };
draw('text', { x: 1, y: 7, ...label }, 'XAUUSD,H1 \u00a01710.52 1710.85 1709.90 1710.08');
[[23, '#175183591 sl'], [25, '#175183589 sl'], [134, '#175183591 sell limit 0.20'], [136, '#175183589 tp'],
  [138, '#175183589 sell 0.10'], [140, '#175183600 buy limit 0.40'], [251, '#175183600 sl']].forEach(([y, text]) =>
  draw('text', { x: 3, y, ...label }, text));

const prices = ['1722.20', '1720.55', '1718.90', '1717.25', '1715.60', '1713.95', '1712.30', '1710.60', '1708.95', '1707.30',
  '1705.65', '1704.00', '1702.35', '1700.65', '1699.00', '1697.35', '1695.70', '1694.05', '1692.40', '1690.75'];
document.getElementById('prices').innerHTML = prices.map(p => `<span>${p}</span>`).join('');
const times = ['6 Sep 2022', '6 Sep 06:00', '6 Sep 08:00', '6 Sep 10:00', '6 Sep 12:00', '6 Sep 14:00', '6 Sep 16:00', '6 Sep 18:00', '6 Sep 20:00',
  '6 Sep 23:00', '7 Sep 01:00', '7 Sep 03:00', '7 Sep 05:00', '7 Sep 07:00', '7 Sep 09:00', '7 Sep 11:00', '7 Sep 13:00', '7 Sep 15:00'];
document.getElementById('times').innerHTML = times.map(t => `<span>${t}</span>`).join('');
```
